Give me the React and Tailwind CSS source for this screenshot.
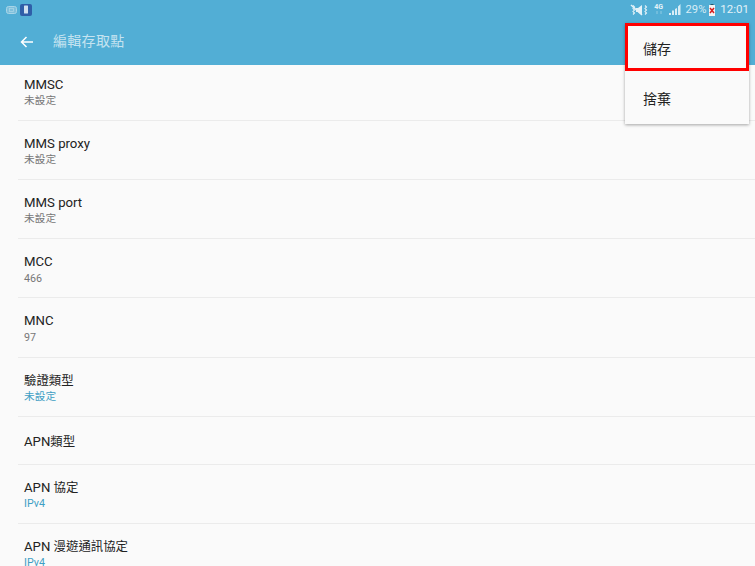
import React from "react";

const font = { fontFamily: '"Roboto","Noto Sans CJK TC",sans-serif' };

const rows = [
  { t: "MMSC", s: "未設定", h: "h-[56px]", pt: "pt-[11px]" },
  { t: "MMS proxy", s: "未設定", h: "h-[59px]" },
  { t: "MMS port", s: "未設定", h: "h-[59px]" },
  { t: "MCC", s: "466", h: "h-[59px]", mt: "mt-[1px]" },
  { t: "MNC", s: "97", h: "h-[60px]", mt: "mt-[1px]" },
  { t: "驗證類型", s: "未設定", blue: true, h: "h-[59px]" },
  { t: "APN類型", h: "h-[48px]" },
  { t: "APN 協定", s: "IPv4", blue: true, h: "h-[59px]" },
  { t: "APN 漫遊通訊協定", s: "IPv4", blue: true, h: "h-[59px]", last: true },
];

function Title({ t }) {
  return t.split(/([\u3400-\u9fff]+)/).map((part, i) =>
    i % 2 ? (
      <span key={i} className="text-[12.4px]">{part}</span>
    ) : (
      <span key={i}>{part}</span>
    )
  );
}

function Row({ t, s, blue, h, pt, mt, last }) {
  return (
    <div className={`${h} ${s ? pt || "pt-[14px]" : "flex items-center pt-[2px]"} ml-[18px] pl-[6px] shrink-0 ${last ? "" : "border-b border-[#ebebeb]"}`}>
      <div className="text-[13.2px] leading-[18px] text-[#222]"><Title t={t} /></div>
      {s && <div className={`text-[10.7px] leading-[14px] ${mt || ""} ${blue ? "text-[#3f9fc4]" : "text-[#777]"}`}>{s}</div>}
    </div>
  );
}

export default function App() {
  return (
    <div className="relative w-[755px] h-[566px] overflow-hidden bg-[#fafafa] flex flex-col" style={font}>
      <div className="h-[65px] bg-[#52aed5] shrink-0 flex flex-col">
        <div className="h-[19px] flex items-center pl-[6px] pr-[6px] text-[#cfe8f3]">
          <svg width="11" height="8" viewBox="0 0 11 8" className="mr-[3px]">
            <rect x="0.5" y="0.5" width="10" height="7" rx="2" fill="#7fc0dc" stroke="#a8d5e8" />
            <rect x="3.500" y="2.500" width="4" height="3" fill="none" stroke="#a8d5e8" strokeWidth="0.8" />
          </svg>
          <svg width="12" height="12" viewBox="0 0 12 12">
            <rect width="12" height="12" rx="2" fill="#2f5ea8" />
            <rect x="4" y="1.500" width="4" height="8" rx="0.5" fill="#cfe0f0" />
          </svg>
          <div className="flex-1" />
          <svg width="18" height="12" viewBox="0 0 18 12" className="mr-[6px]">
            <path d="M6 4h2l4-3v10L8 8H6z" fill="#e4f2f8" />
            <path d="M3 1.500l1.500 1.500L3 4.500 4.500 6 3 7.500 4.500 9 3 10.500M15 1.500L16.500 3 15 4.500 16.500 6 15 7.500 16.500 9 15 10.500" stroke="#e4f2f8" strokeWidth="1.100" fill="none" />
            <path d="M1 1l11 10" stroke="#e4f2f8" strokeWidth="1.500" />
          </svg>
          <span className="w-[10px] mr-[5px] flex flex-col items-center -mt-[1px]">
            <span className="text-[7px] font-bold leading-[7px] text-[#e4f2f8]">4G</span>
            <svg width="8" height="3" viewBox="0 0 8 3"><path d="M2 0v3M6 0v3" stroke="#8fcbe3" strokeWidth="1" /></svg>
          </span>
          <svg width="12" height="11" viewBox="0 0 12 11" className="mr-[5px]">
            <path d="M0 11h2V9H0zM3 11h2V6.500H3zM6 11h2V4L6 5zM9 11h2.500V0L9 2.500z" fill="#d8edf6" />
          </svg>
          <span className="text-[11.2px] leading-none text-[#d8edf6] mr-[3px]">29%</span>
          <svg width="6" height="12" viewBox="0 0 6 12" className="mr-[5px]">
            <rect x="1.500" width="3" height="1" fill="#26576b" />
            <rect y="1" width="6" height="11" fill="#f4f4f4" />
            <path d="M1 4l4 5M5 4L1 9" stroke="#d81c1c" strokeWidth="1.500" />
          </svg>
          <span className="text-[11.5px] leading-none text-[#e4f2f8]">12:01</span>
        </div>
        <div className="flex-1 flex items-center pl-[20px] pb-[1px]">
          <svg width="14" height="14" viewBox="0 0 14 14" fill="none" stroke="#ffffff" strokeWidth="1.500">
            <path d="M13 7H1.500M6.500 2L1.500 7l5 5" />
          </svg>
          <span className="ml-[19px] text-[14px] tracking-[0.3px] text-[#c5e3f0]">編輯存取點</span>
        </div>
      </div>

      <div className="flex flex-col min-h-0">
        {rows.map((r) => (
          <Row key={r.t} {...r} />
        ))}
      </div>

      <div className="absolute left-[625px] top-[23px] w-[124px] h-[101px] bg-[#fafafa] shadow-[0_1px_3px_rgba(0,0,0,0.35)] text-[#222] text-[14px]">
        <div className="h-[48px] border-[3px] border-[#ff0000] flex items-center pl-[15px] pt-[4px]">儲存</div>
        <div className="h-[53px] flex items-center pl-[18px] pt-[3px]">捨棄</div>
      </div>
    </div>
  );
}
